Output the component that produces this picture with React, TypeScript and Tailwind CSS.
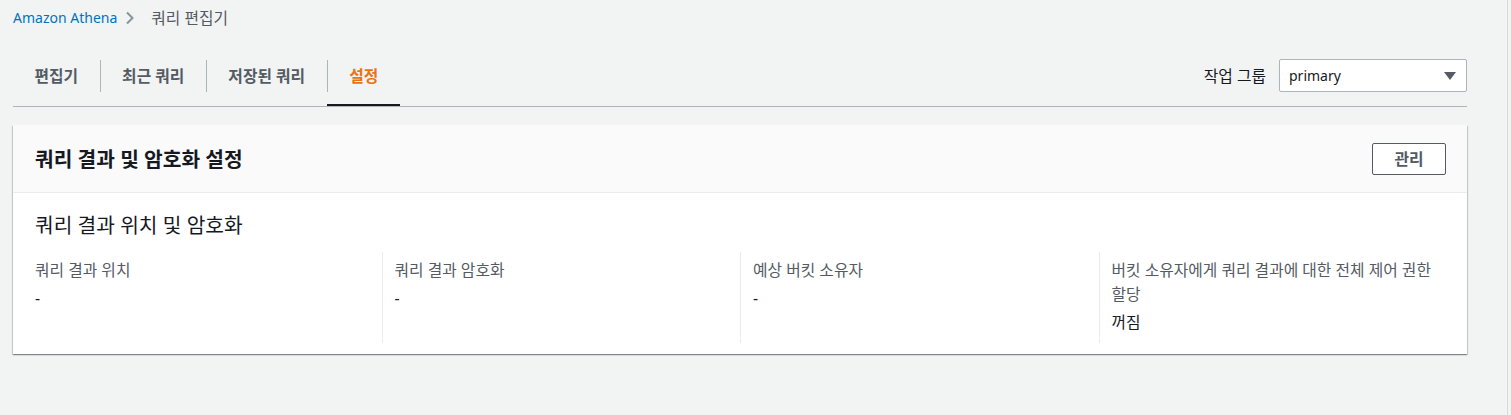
const columns = [
  { label: "쿼리 결과 위치", value: "-" },
  { label: "쿼리 결과 암호화", value: "-" },
  { label: "예상 버킷 소유자", value: "-" },
  { label: "버킷 소유자에게 쿼리 결과에 대한 전체 제어 권한 할당", value: "꺼짐" },
];

const tabs = ["편집기", "최근 쿼리", "저장된 쿼리", "설정"];

function Tabs({ active }: { active: string }) {
  return (
    <div className="flex h-full items-stretch">
      {tabs.map((t, i) => (
        <div
          key={t}
          className={
            t === active
              ? "flex items-center shadow-[inset_0_-2px_0_#16191f]"
              : "flex items-center"
          }
        >
          <div
            className={
              (i === 0 ? "" : "border-l border-[#aab7b8] ") +
              "flex h-[32px] items-center px-[21.5px] text-[15.8px] font-bold leading-[20px] " +
              (t === active ? "text-[#ec7211]" : "text-[#545b64]")
            }
          >
            {t}
          </div>
        </div>
      ))}
    </div>
  );
}

function WorkgroupSelect() {
  return (
    <div className="flex items-center gap-[13px]">
      <span className="text-[15.8px] leading-[20px] text-[#16191f]">작업 그룹</span>
      <div className="flex h-[33px] w-[188px] items-center justify-between rounded-[2px] border border-[#aab7b8] bg-white pl-[9px] pr-[10px]">
        <span className="text-[14px] leading-[20px] text-[#16191f]">primary</span>
        <svg width="12" height="8" viewBox="0 0 12 8">
          <path d="M0 0h12L6 8z" fill="#545b64" />
        </svg>
      </div>
    </div>
  );
}

function SettingsCard() {
  return (
    <div className="mt-[18px] bg-white shadow-[0_1px_1px_0_rgba(0,28,36,0.3),1px_1px_1px_0_rgba(0,28,36,0.15),-1px_1px_1px_0_rgba(0,28,36,0.15)]">
      <div className="flex h-[68px] items-center justify-between border-b border-[#eaeded] bg-[#fafafa] pl-[22px] pr-[21px]">
        <h2 className="text-[20.3px] font-bold leading-[26px] text-[#16191f]">
          쿼리 결과 및 암호화 설정
        </h2>
        <button className="h-[32px] w-[74px] rounded-[2px] border border-[#545b64] bg-white text-[15.8px] font-bold leading-[20px] text-[#545b64]">
          관리
        </button>
      </div>

      <div className="px-[10px] pb-[11px] pt-[20px]">
        <h3 className="px-[12px] text-[20.3px] leading-[24px] text-[#16191f]">
          쿼리 결과 위치 및 암호화
        </h3>
        <div className="mt-[15px] grid grid-cols-4">
          {columns.map((c, i) => (
            <div
              key={c.label}
              className={
                (i === 0 ? "" : "border-l border-[#eaeded] ") +
                "px-[12px] pb-[9px] pt-[6px]"
              }
            >
              <div className="text-[15.8px] leading-[24px] text-[#545b64]">{c.label}</div>
              <div className="mt-[4px] text-[15.8px] leading-[24px] text-[#16191f]">
                {c.value}
              </div>
            </div>
          ))}
        </div>
      </div>
    </div>
  );
}

export default function App() {
  return (
    <div
      className="flex h-[415px] w-[1511px] bg-[#f2f3f3]"
      style={{ fontFamily: '"Noto Sans", "Noto Sans CJK KR", sans-serif' }}
    >
      <div className="w-[1508px] border-r border-[#d5dbdb] pl-[13px]">
        <div className="w-[1454px]">
          <nav className="flex items-center pt-[8px] leading-[20px]">
            <span className="text-[14px] text-[#0073bb]">Amazon Athena</span>
            <svg className="ml-[8px]" width="10" height="14" viewBox="0 0 10 14">
              <path d="M2 1.5l5.5 5.5L2 12.5" fill="none" stroke="#879596" strokeWidth="2" />
            </svg>
            <span className="ml-[16px] text-[15.8px] text-[#545b64]">쿼리 편집기</span>
          </nav>

          <div className="mt-[17px] flex h-[62px] items-center justify-between border-b border-[#aab7b8]">
            <Tabs active="설정" />
            <WorkgroupSelect />
          </div>

          <SettingsCard />
        </div>
      </div>
    </div>
  );
}
